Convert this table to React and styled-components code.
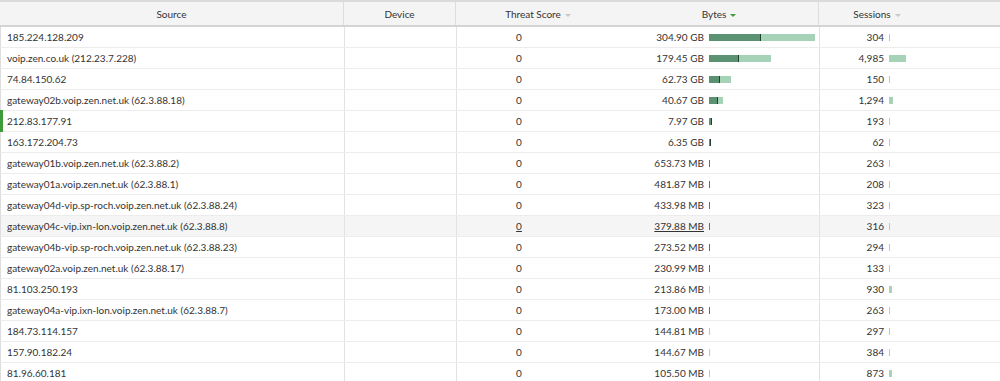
import styled, { createGlobalStyle } from "styled-components";

const GlobalStyle = createGlobalStyle`
  html, body {
    margin: 0;
    padding: 0;
    background: #ffffff;
  }
  body {
    font-family: Lato, "Open Sans", sans-serif;
    color: #333333;
    overflow: hidden;
  }
`;

const rows = [
  { source: "185.224.128.209", bytes: "304.90 GB", gb: 304.9, sent: 0.48, sessions: 304 },
  { source: "voip.zen.co.uk (212.23.7.228)", bytes: "179.45 GB", gb: 179.45, sent: 0.47, sessions: 4985 },
  { source: "74.84.150.62", bytes: "62.73 GB", gb: 62.73, sent: 0.46, sessions: 150 },
  { source: "gateway02b.voip.zen.net.uk (62.3.88.18)", bytes: "40.67 GB", gb: 40.67, sent: 0.57, sessions: 1294 },
  { source: "212.83.177.91", bytes: "7.97 GB", gb: 7.97, sent: 0.7, sessions: 193, marked: true },
  { source: "163.172.204.73", bytes: "6.35 GB", gb: 6.35, sent: 0.7, sessions: 62 },
  { source: "gateway01b.voip.zen.net.uk (62.3.88.2)", bytes: "653.73 MB", gb: 0.65, sent: 0.6, sessions: 263 },
  { source: "gateway01a.voip.zen.net.uk (62.3.88.1)", bytes: "481.87 MB", gb: 0.48, sent: 0.6, sessions: 208 },
  { source: "gateway04d-vip.sp-roch.voip.zen.net.uk (62.3.88.24)", bytes: "433.98 MB", gb: 0.43, sent: 0.6, sessions: 323 },
  { source: "gateway04c-vip.ixn-lon.voip.zen.net.uk (62.3.88.8)", bytes: "379.88 MB", gb: 0.38, sent: 0.6, sessions: 316, hover: true },
  { source: "gateway04b-vip.sp-roch.voip.zen.net.uk (62.3.88.23)", bytes: "273.52 MB", gb: 0.27, sent: 0.6, sessions: 294 },
  { source: "gateway02a.voip.zen.net.uk (62.3.88.17)", bytes: "230.99 MB", gb: 0.23, sent: 0.6, sessions: 133 },
  { source: "81.103.250.193", bytes: "213.86 MB", gb: 0.21, sent: 0.1, sessions: 930 },
  { source: "gateway04a-vip.ixn-lon.voip.zen.net.uk (62.3.88.7)", bytes: "173.00 MB", gb: 0.17, sent: 0.6, sessions: 263 },
  { source: "184.73.114.157", bytes: "144.81 MB", gb: 0.14, sent: 0.1, sessions: 297 },
  { source: "157.90.182.24", bytes: "144.67 MB", gb: 0.14, sent: 0.1, sessions: 384 },
  { source: "81.96.60.181", bytes: "105.50 MB", gb: 0.1, sent: 0.1, sessions: 873 },
];

const BYTES_MAX = 304.9;
const BYTES_BAR = 106;
const SESSION_SCALE = 17 / 4985;

const COLUMNS = "344px 112px 164px 199px 116px 1fr";

export default function App() {
  return (
    <>
      <GlobalStyle />
      <Table>
        <HeaderRow>
          <HeadCell $border>Source</HeadCell>
          <HeadCell $border>Device</HeadCell>
          <HeadCell>
            Threat Score <SortArrow />
          </HeadCell>
          <HeadCell $border>
            Bytes <SortArrow $active />
          </HeadCell>
          <HeadCell>
            Sessions <SortArrow />
          </HeadCell>
          <HeadCell />
        </HeaderRow>

        {rows.map((r) => {
          const total = Math.max(1, Math.round((r.gb / BYTES_MAX) * BYTES_BAR));
          const dark = total > 2 ? Math.round(total * r.sent) : 0;
          const sessW = Math.max(1, Math.round(r.sessions * SESSION_SCALE));
          return (
            <Row key={r.source} $hover={r.hover}>
              {r.marked && <Marker />}
              <SourceCell $border>{r.source}</SourceCell>
              <Cell $border />
              <ScoreCell $underline={r.hover}>0</ScoreCell>
              <MetricCell $border>
                <Value $width={83} $underline={r.hover}>
                  {r.bytes}
                </Value>
                {total > 2 ? (
                  <Bar>
                    <Segment $dark style={{ width: dark }} />
                    <Tick />
                    <Segment style={{ width: total - dark - 1 }} />
                  </Bar>
                ) : total === 2 ? (
                  <Bar>
                    <Segment $dark style={{ width: 1 }} />
                    <Tick />
                  </Bar>
                ) : (
                  <Bar>
                    <Thin $light={r.sent < 0.5} />
                  </Bar>
                )}
              </MetricCell>
              <MetricCell>
                <Value $width={64}>{r.sessions.toLocaleString("en-US")}</Value>
                <Bar>
                  <Segment style={{ width: sessW }} />
                </Bar>
              </MetricCell>
              <Cell />
            </Row>
          );
        })}
      </Table>
    </>
  );
}

const Table = styled.div`
  width: 1000px;
  font-size: 10px;
  line-height: 1;
`;

const HeaderRow = styled.div`
  display: grid;
  grid-template-columns: ${COLUMNS};
  height: 27px;
  box-sizing: border-box;
  background: #f4f4f4;
  border-top: 2px solid #dadada;
  border-bottom: 2px solid #d4d4d4;
`;

const HeadCell = styled.div`
  display: flex;
  align-items: center;
  justify-content: center;
  gap: 4px;
  color: #333333;
  border-right: ${(p) => (p.$border ? "1px solid #dddddd" : "none")};
  white-space: nowrap;
`;

const SortArrow = styled.span`
  width: 0;
  height: 0;
  margin-top: 3px;
  border-left: 3px solid transparent;
  border-right: 3px solid transparent;
  border-top: 3px solid ${(p) => (p.$active ? "#3f9a3a" : "#c8c8c8")};
`;

const Row = styled.div`
  position: relative;
  display: grid;
  grid-template-columns: ${COLUMNS};
  height: 21px;
  box-sizing: border-box;
  border-bottom: 1px solid #ececec;
  border-left: 1px solid #dddddd;
  background: ${(p) => (p.$hover ? "#f5f5f5" : "#ffffff")};
`;

const Marker = styled.div`
  position: absolute;
  left: -1px;
  top: -1px;
  bottom: -1px;
  width: 3px;
  background: #3f9b3a;
`;

const Cell = styled.div`
  display: flex;
  align-items: center;
  border-right: ${(p) => (p.$border ? "1px solid #e2e2e2" : "none")};
  white-space: nowrap;
  overflow: hidden;
`;

const SourceCell = styled(Cell)`
  padding-left: 6px;
`;

const ScoreCell = styled(Cell)`
  justify-content: center;
  padding-right: 40px;
  text-decoration: ${(p) => (p.$underline ? "underline" : "none")};
`;

const MetricCell = styled(Cell)`
  gap: 5px;
`;

const Value = styled.span`
  width: ${(p) => p.$width}px;
  flex: none;
  text-align: right;
  text-decoration: ${(p) => (p.$underline ? "underline" : "none")};
`;

const Bar = styled.div`
  display: flex;
  height: 7px;
  margin-top: 1px;
`;

const Segment = styled.div`
  height: 100%;
  background: ${(p) => (p.$dark ? "#5a9272" : "#a6d3b8")};
`;

const Tick = styled.div`
  width: 1px;
  height: 100%;
  background: #22402f;
`;

const Thin = styled.div`
  width: 1px;
  height: 100%;
  background: ${(p) => (p.$light ? "#a6d3b8" : "#6a6a6a")};
`;
